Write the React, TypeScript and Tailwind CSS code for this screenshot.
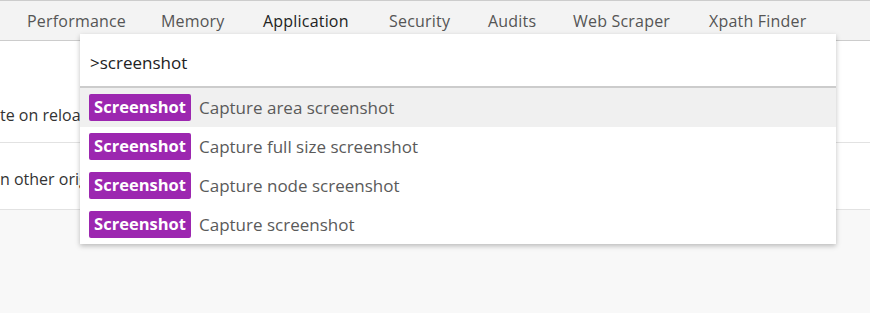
import React from 'react';

// tab label + the width of its slot (label start to next label start)
const tabs = [
    { label: 'Performance', w: 'w-[134px]' },
    { label: 'Memory', w: 'w-[102px]' },
    { label: 'Application', w: 'w-[126px]' },
    { label: 'Security', w: 'w-[99px]' },
    { label: 'Audits', w: 'w-[85px]' },
    { label: 'Web Scraper', w: 'w-[136px]' },
    { label: 'Xpath Finder', w: 'w-[110px]' },
];

const commands = [
    'Capture area screenshot',
    'Capture full size screenshot',
    'Capture node screenshot',
    'Capture screenshot',
];

export default function App() {
    return (
        <div className="relative w-[870px] h-[313px] overflow-hidden bg-[#f8f8f8] font-['Open_Sans',sans-serif]">
            {/* Tab strip */}
            <div className="h-[41px] bg-[#f3f3f3] border-t border-b border-[#cccccc] flex items-center pl-[27px] pt-[1px]">
                {tabs.map((tab) => (
                    <div
                        key={tab.label}
                        className={`${tab.w} shrink-0 text-[16px] tracking-[0.2px] whitespace-nowrap ${tab.label === 'Application' ? 'text-[#222222]' : 'text-[#555555]'}`}
                    >
                        {tab.label}
                    </div>
                ))}
            </div>

            {/* Panel rows behind the palette */}
            <div className="bg-white h-[102px] border-b border-[#e2e2e2] pt-[62px] text-[16px] text-[#333333]">
                <div className="w-[80px] overflow-hidden whitespace-nowrap">te on reload</div>
            </div>
            <div className="bg-white h-[67px] border-b border-[#e2e2e2] pt-[24px] text-[16px] text-[#333333]">
                <div className="w-[80px] overflow-hidden whitespace-nowrap">n other origins</div>
            </div>

            {/* Command palette */}
            <div className="absolute left-[80px] top-[34px] w-[756px] bg-white shadow-[0_2px_5px_rgba(0,0,0,0.25)]">
                <div className="h-[54px] flex items-center pl-[10px] pt-[6px] border-b-2 border-[#cccccc] text-[17px] text-[#222222]">
                    &gt;screenshot
                </div>
                {commands.map((cmd, i) => (
                    <div
                        key={cmd}
                        className={`h-[39px] flex items-start pt-[6px] pl-[9px] gap-[8px] ${i === 0 ? 'bg-[#f0f0f0]' : ''}`}
                    >
                        <span className="h-[27px] w-[102px] justify-center rounded-[2px] bg-[#9c27b0] text-white font-bold text-[16.5px] flex items-center">
                            Screenshot
                        </span>
                        <span className="h-[27px] flex items-center text-[17px] text-[#5a5a5a]">{cmd}</span>
                    </div>
                ))}
            </div>
        </div>
    );
}
